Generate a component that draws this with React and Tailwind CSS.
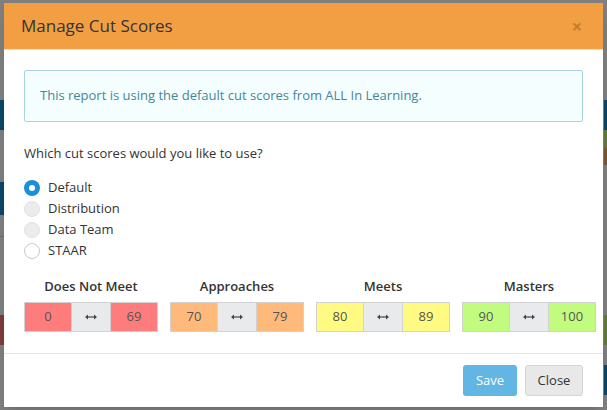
import React, { useState } from 'react';

const groups = [
  { label: 'Does Not Meet', from: '0', to: '69', color: 'bg-[#ff7c7c]' },
  { label: 'Approaches', from: '70', to: '79', color: 'bg-[#ffb97b]' },
  { label: 'Meets', from: '80', to: '89', color: 'bg-[#fffb82]' },
  { label: 'Masters', from: '90', to: '100', color: 'bg-[#c2fc7e]' },
];

const options = ['Default', 'Distribution', 'Data Team', 'STAAR'];

const ArrowIcon = () => (
  <svg width="12" height="6" viewBox="0 0 12 6" className="text-[#444]">
    <path d="M0 3 L3 0.5 L3 5.5 Z M12 3 L9 0.5 L9 5.5 Z" fill="currentColor" />
    <rect x="2" y="2.4" width="8" height="1.2" fill="currentColor" />
  </svg>
);

const Radio = ({ state }) => {
  if (state === 'checked') {
    return (
      <span className="w-4 h-4 rounded-full bg-[#1b8fd8] flex items-center justify-center">
        <span className="w-[6px] h-[6px] rounded-full bg-white" />
      </span>
    );
  }
  if (state === 'disabled') {
    return <span className="w-4 h-4 rounded-full bg-[#ececee] border border-[#e2e2e4]" />;
  }
  return <span className="w-4 h-4 rounded-full bg-white border border-[#c9c9c9]" />;
};

const App = () => {
  const [selected, setSelected] = useState('Default');

  return (
    <div
      className="relative w-[607px] h-[410px] overflow-hidden bg-[#7f7f7f]"
      style={{ fontFamily: '"Open Sans", "Noto Sans", sans-serif' }}
    >
      {/* page behind the overlay */}
      <div className="absolute left-0 top-[100px] w-[4px] h-[30px] bg-[#0c4668]" />
      <div className="absolute left-0 top-[182px] w-[4px] h-[33px] bg-[#0c4668]" />
      <div className="absolute left-0 top-[315px] w-[4px] h-[30px] bg-[#7e3b3b]" />
      <div className="absolute left-0 top-[236px] w-[4px] h-[1px] bg-[#6b6b6b]" />
      <div className="absolute right-0 top-[100px] w-[3px] h-[30px] bg-[#0c4668]" />
      <div className="absolute right-0 top-[130px] w-[3px] h-[18px] bg-[#617a3a]" />
      <div className="absolute right-0 top-[148px] w-[3px] h-[17px] bg-[#7d5634]" />
      <div className="absolute right-0 top-[315px] w-[3px] h-[30px] bg-[#617a3a]" />
      <div className="absolute right-0 top-[365px] w-[3px] h-[30px] bg-[#0c4668]" />

      {/* modal */}
      <div className="absolute left-[4px] top-[3px] w-[599px] h-[404px] bg-white flex flex-col shadow-lg">
        <div className="h-[47px] bg-[#f29f44] flex items-center justify-between pl-[17px] pr-[21px] border-b border-[#e5e5e5]">
          <h4 className="text-[17px] text-[#333]">Manage Cut Scores</h4>
          <span className="text-[18px] leading-none text-[#c97a2b] font-bold">×</span>
        </div>

        <div className="pt-[20px] px-[20px] flex-1">
          <div className="h-[52px] border border-[#a9d3dc] bg-[#f4fefe] rounded-[2px] flex items-center px-[15px]">
            <p className="text-[13px] text-[#45869a]">
              This report is using the default cut scores from ALL In Learning.
            </p>
          </div>

          <p className="mt-[22px] text-[13px] text-[#333]">Which cut scores would you like to use?</p>

          <div className="mt-[14px] flex flex-col">
            {options.map((opt) => (
              <label
                key={opt}
                onClick={() => setSelected(opt)}
                className="h-[21px] flex items-center gap-[8px] text-[13px] text-[#333]"
              >
                <Radio state={selected === opt ? 'checked' : opt === 'STAAR' ? 'empty' : 'disabled'} />
                {opt}
              </label>
            ))}
          </div>

          <div className="mt-[14px] w-[572px] grid grid-cols-4 gap-[12px]">
            {groups.map((g) => (
              <div key={g.label} className="flex flex-col items-center">
                <span className="text-[13px] font-semibold text-[#333] h-[20px] leading-[20px]">{g.label}</span>
                <div className="mt-[6px] w-full h-[30px] flex border border-[#d2d2d2] text-[13px] text-[#555]">
                  <div className={`flex-1 flex items-center justify-center ${g.color}`}>{g.from}</div>
                  <div className="w-[40px] flex items-center justify-center bg-[#e9eaec] border-x border-[#d2d2d2]">
                    <ArrowIcon />
                  </div>
                  <div className={`flex-1 flex items-center justify-center ${g.color}`}>{g.to}</div>
                </div>
              </div>
            ))}
          </div>
        </div>

        <div className="h-[54px] border-t border-[#e5e5e5] flex items-center justify-end gap-[8px] pr-[20px]">
          <button className="h-[31px] w-[54px] rounded-[3px] bg-[#62b6e4] text-white text-[13px]">Save</button>
          <button className="h-[31px] w-[58px] rounded-[3px] bg-[#e8e8e8] border border-[#d5d5d5] text-[#333] text-[13px]">
            Close
          </button>
        </div>
      </div>
    </div>
  );
};

export default App;
